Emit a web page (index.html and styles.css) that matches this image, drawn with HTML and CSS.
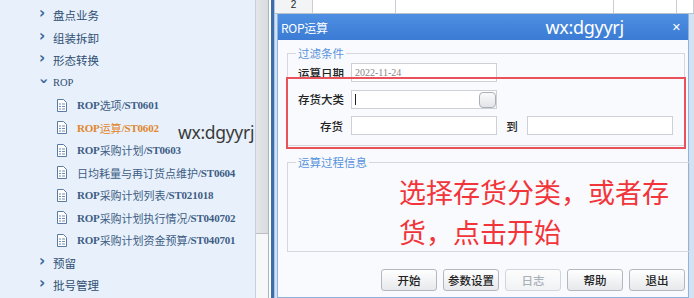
FILE: index.html
```html
<!DOCTYPE html>
<html lang="zh-CN">
<head>
    <meta charset="UTF-8">
    <title>ROP运算</title>
    <link rel="stylesheet" href="styles.css">
</head>
<body>
    <div class="sidebar">
        <div class="node"><span class="chev">&#x203A;</span>盘点业务</div>
        <div class="node"><span class="chev">&#x203A;</span>组装拆卸</div>
        <div class="node"><span class="chev">&#x203A;</span>形态转换</div>
        <div class="node open"><span class="chev down">&#x203A;</span><span class="latin">ROP</span></div>
        <div class="leaf"><svg class="doc" viewBox="0 0 11 13"><path d="M1.5 0.5h6l3 3v9h-9z" fill="#fff" stroke="#5b7aa3"/><path d="M3 5h2M3 7.5h2M3 10h2M6 5h3M6 7.5h3M6 10h3" stroke="#6f8cb2"/></svg><span class="latin">ROP</span>选项<span class="latin">/ST0601</span></div>
        <div class="leaf active"><svg class="doc" viewBox="0 0 11 13"><path d="M1.5 0.5h6l3 3v9h-9z" fill="#fff" stroke="#5b7aa3"/><path d="M3 5h2M3 7.5h2M3 10h2M6 5h3M6 7.5h3M6 10h3" stroke="#6f8cb2"/></svg><span class="latin">ROP</span>运算<span class="latin">/ST0602</span></div>
        <div class="leaf"><svg class="doc" viewBox="0 0 11 13"><path d="M1.5 0.5h6l3 3v9h-9z" fill="#fff" stroke="#5b7aa3"/><path d="M3 5h2M3 7.5h2M3 10h2M6 5h3M6 7.5h3M6 10h3" stroke="#6f8cb2"/></svg><span class="latin">ROP</span>采购计划<span class="latin">/ST0603</span></div>
        <div class="leaf"><svg class="doc" viewBox="0 0 11 13"><path d="M1.5 0.5h6l3 3v9h-9z" fill="#fff" stroke="#5b7aa3"/><path d="M3 5h2M3 7.5h2M3 10h2M6 5h3M6 7.5h3M6 10h3" stroke="#6f8cb2"/></svg>日均耗量与再订货点维护<span class="latin">/ST0604</span></div>
        <div class="leaf"><svg class="doc" viewBox="0 0 11 13"><path d="M1.5 0.5h6l3 3v9h-9z" fill="#fff" stroke="#5b7aa3"/><path d="M3 5h2M3 7.5h2M3 10h2M6 5h3M6 7.5h3M6 10h3" stroke="#6f8cb2"/></svg><span class="latin">ROP</span>采购计划列表<span class="latin">/ST021018</span></div>
        <div class="leaf"><svg class="doc" viewBox="0 0 11 13"><path d="M1.5 0.5h6l3 3v9h-9z" fill="#fff" stroke="#5b7aa3"/><path d="M3 5h2M3 7.5h2M3 10h2M6 5h3M6 7.5h3M6 10h3" stroke="#6f8cb2"/></svg><span class="latin">ROP</span>采购计划执行情况<span class="latin">/ST040702</span></div>
        <div class="leaf"><svg class="doc" viewBox="0 0 11 13"><path d="M1.5 0.5h6l3 3v9h-9z" fill="#fff" stroke="#5b7aa3"/><path d="M3 5h2M3 7.5h2M3 10h2M6 5h3M6 7.5h3M6 10h3" stroke="#6f8cb2"/></svg><span class="latin">ROP</span>采购计划资金预算<span class="latin">/ST040701</span></div>
        <div class="node"><span class="chev">&#x203A;</span>预留</div>
        <div class="node"><span class="chev">&#x203A;</span>批号管理</div>
        <div class="watermark side-mark">wx:dgyyrj</div>
    </div>
    <div class="scrollbar"><div class="thumb"></div></div>
    <div class="splitter"></div>
    <div class="main">
        <div class="grid-row">
            <div class="cell num">2</div>
            <div class="cell"></div>
            <div class="cell"></div>
            <div class="cell"></div>
            <div class="cell"></div>
        </div>
        <div class="dialog">
            <div class="titlebar">
                <span class="title">ROP运算</span>
                <span class="watermark">wx:dgyyrj</span>
                <span class="close">&#x2715;</span>
            </div>
            <div class="dialog-body">
                <fieldset class="filter">
                    <legend>过滤条件</legend>
                    <div class="row">
                        <label>运算日期</label>
                        <div class="input date">2022-11-24</div>
                    </div>
                    <div class="row">
                        <label>存货大类</label>
                        <div class="input picker"><span class="caret"></span><span class="pick-btn"></span></div>
                    </div>
                    <div class="row">
                        <label>存货</label>
                        <div class="input"></div>
                        <span class="to">到</span>
                        <div class="input"></div>
                    </div>
                </fieldset>
                <fieldset class="log">
                    <legend>运算过程信息</legend>
                    <p class="note">选择存货分类，或者存货，点击开始</p>
                </fieldset>
                <div class="buttons">
                    <button>开始</button>
                    <button>参数设置</button>
                    <button disabled>日志</button>
                    <button>帮助</button>
                    <button>退出</button>
                </div>
                <div class="highlight"></div>
            </div>
        </div>
    </div>
</body>
</html>
```

FILE: styles.css
```css
body {
    margin: 0;
    width: 694px;
    height: 298px;
    overflow: hidden;
    display: flex;
    font-family: "Noto Sans CJK SC", sans-serif;
    background: #d3e2f3;
}

/* left tree */
.sidebar {
    position: relative;
    width: 255px;
    padding-top: 4px;
    background: #e8f1fb;
    flex-shrink: 0;
}

.node, .leaf {
    height: 22.5px;
    display: flex;
    align-items: center;
    white-space: nowrap;
}

.node {
    padding-left: 39px;
    font-size: 11.5px;
    color: #2f4e72;
}

.chev {
    width: 14px;
    font-family: "DejaVu Sans", sans-serif;
    font-size: 15px;
    font-weight: bold;
    color: #3a679a;
    line-height: 1;
    margin-top: -3px;
}

.chev.down {
    transform: rotate(90deg);
    width: 9px;
    margin-right: 5px;
    margin-top: 0;
}

.node .latin {
    font-family: "Liberation Serif", serif;
    font-size: 10.5px;
}

.leaf {
    padding-left: 56px;
    font-size: 11px;
    color: #3e5d85;
}

.leaf .latin {
    font-family: "Liberation Serif", serif;
    font-size: 11px;
    font-weight: bold;
    letter-spacing: -0.2px;
}

.leaf.active {
    color: #e2862c;
}

.doc {
    width: 11px;
    height: 13px;
    margin-right: 10px;
}

.watermark {
    font-family: "Noto Sans", sans-serif;
    font-size: 17.5px;
    letter-spacing: -0.3px;
}

.side-mark {
    position: absolute;
    left: 178px;
    top: 120px;
    color: #3a3a3a;
}

.scrollbar {
    width: 12px;
    flex-shrink: 0;
    border-left: 1px solid #c7d1dc;
    border-right: 1px solid #a9b3bf;
    background: #f6f7f8;
}

.thumb {
    height: 233px;
    background: linear-gradient(90deg, #e4e6e9, #d9dcdf);
    border-bottom: 1px solid #b9bec4;
}

.splitter {
    width: 6px;
    flex-shrink: 0;
    background: linear-gradient(90deg, #fff 0 2px, #3c6ea8 2px 5px, #a9c4e6 5px);
}

/* right area */
.main {
    flex: 1;
    display: flex;
    flex-direction: column;
}

.grid-row {
    height: 13px;
    display: grid;
    grid-template-columns: 38px 83px 218px 63px 1fr;
    background: #fff;
    border-bottom: 1px solid #b8c2cd;
}

.cell {
    border-right: 1px solid #c8ced6;
}

.cell.num {
    background: #f2f4f6;
    font-family: "Liberation Sans", sans-serif;
    font-size: 10px;
    text-align: center;
    line-height: 10px;
    color: #222;
}

.dialog {
    margin-left: 2px;
    width: 410px;
    flex: 1;
    border: 1px solid #8fb2de;
    border-top: none;
    background: #f8fafd;
}

.titlebar {
    height: 26px;
    display: flex;
    align-items: center;
    padding: 0 7px 0 3px;
    background: linear-gradient(#4d8fe2, #3b7bd4);
    color: #fff;
}

.title {
    font-size: 12px;
    letter-spacing: -0.3px;
}

.titlebar .watermark {
    margin-left: auto;
    margin-right: 48px;
    font-size: 18px;
}

.close {
    font-family: "DejaVu Sans", sans-serif;
    font-size: 11px;
    font-weight: bold;
}

.dialog-body {
    position: relative;
    padding: 6px 3px 0 9px;
}

fieldset {
    margin: 0;
    border: 1px solid #d4d8de;
    padding: 0 10px;
}

legend {
    padding: 0 2px;
    margin-left: -2px;
    font-size: 11.5px;
    line-height: 14px;
    color: #5a93dc;
}

.filter {
    height: 95px;
    padding-top: 3px;
}

.row {
    height: 19px;
    margin-bottom: 7.5px;
    display: flex;
    align-items: center;
}

.row label {
    width: 45px;
    margin-right: 8px;
    text-align: right;
    font-size: 11.5px;
    font-weight: 500;
    color: #222;
    white-space: nowrap;
}

.input {
    position: relative;
    width: 144px;
    height: 17px;
    border: 1px solid #cdd0d4;
    background: #fff;
}

.date {
    font-family: "Liberation Serif", serif;
    font-size: 10px;
    color: #888;
    line-height: 17px;
    padding-left: 3px;
    width: 141px;
}

.caret {
    position: absolute;
    left: 3px;
    top: 3px;
    width: 1px;
    height: 11px;
    background: #222;
}

.pick-btn {
    position: absolute;
    right: 0;
    top: 1px;
    width: 15px;
    height: 14px;
    border: 1px solid #aab0b8;
    border-radius: 4px;
    background: linear-gradient(#fafafa, #e2e5e8);
}

.to {
    width: 30px;
    text-align: center;
    font-size: 11.5px;
    font-weight: 500;
    color: #222;
}

.log {
    margin-top: 9px;
    height: 95px;
}

.note {
    margin: 3px 0 0 101px;
    width: 280px;
    font-size: 27px;
    line-height: 40px;
    color: #f2353a;
}

.buttons {
    display: flex;
    justify-content: flex-end;
    gap: 6px;
    margin-top: 17px;
}

button {
    width: 56px;
    height: 22px;
    padding: 0;
    border: 1px solid #b3b8bf;
    border-radius: 3px;
    background: linear-gradient(#ffffff, #e6e8eb);
    font-family: "Noto Sans CJK SC", sans-serif;
    font-size: 11.5px;
    font-weight: 500;
    color: #222;
}

button:disabled {
    color: #a9b0b8;
    border-color: #d2d6db;
    background: linear-gradient(#fdfdfd, #f0f2f4);
}

/* red annotation frame */
.highlight {
    position: absolute;
    left: 8px;
    top: 37px;
    width: 396px;
    height: 68px;
    border: 2px solid #e9525b;
    pointer-events: none;
}
```
